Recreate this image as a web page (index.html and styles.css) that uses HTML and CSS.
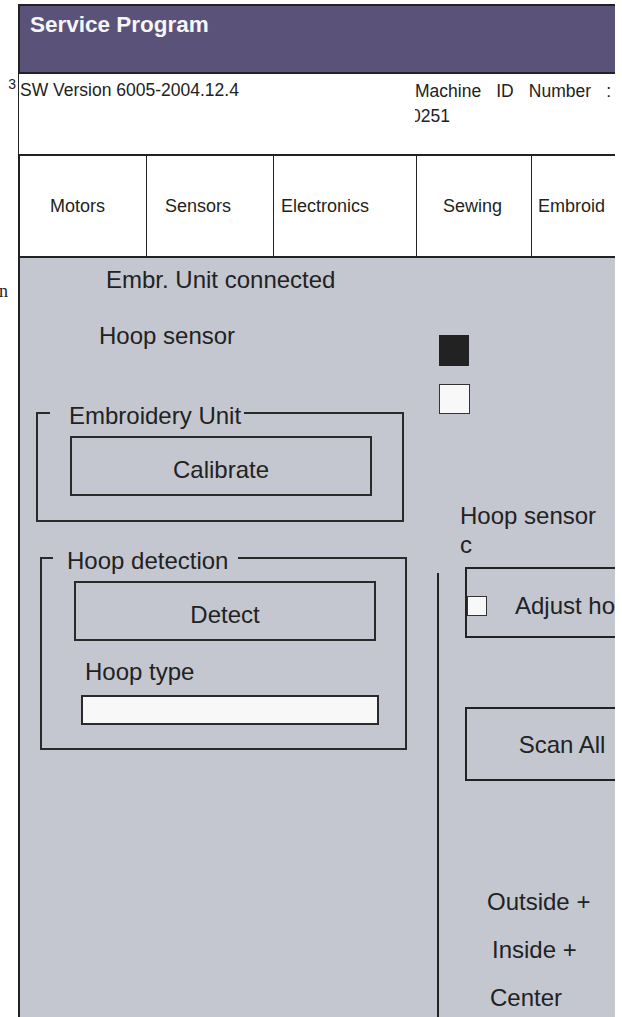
FILE: index.html
```html
<!DOCTYPE html>
<html lang="en">
<head>
  <meta charset="UTF-8" />
  <meta name="viewport" content="width=device-width, initial-scale=1.0" />
  <title>Service Program</title>
  <link rel="stylesheet" href="styles.css">
</head>
<body>

  <div class="page">
    <div class="gutter"></div>
    <header class="title-bar">Service Program</header>

    <div class="gutter note">3</div>
    <div class="info">
      <span class="sw-version">SW Version 6005-2004.12.4</span>
      <div class="machine-id">
        <p class="mid-label">Machine ID Number :</p>
        <p class="mid-value">0251</p>
      </div>
    </div>

    <div class="gutter"></div>
    <nav class="tabs">
      <div class="tab">Motors</div>
      <div class="tab">Sensors</div>
      <div class="tab">Electronics</div>
      <div class="tab">Sewing</div>
      <div class="tab">Embroid</div>
    </nav>

    <div class="gutter stray">n</div>
    <main class="panel">
      <div class="col-left">
        <p class="status">Embr. Unit connected</p>
        <p class="status sensor">Hoop sensor</p>

        <fieldset class="group embroidery">
          <legend>Embroidery Unit</legend>
          <button type="button" class="btn">Calibrate</button>
        </fieldset>

        <fieldset class="group detection">
          <legend>Hoop detection</legend>
          <button type="button" class="btn">Detect</button>
          <label class="field-label" for="hoopType">Hoop type</label>
          <input type="text" id="hoopType" class="field" readonly />
        </fieldset>
      </div>

      <div class="col-right">
        <div class="lamp on"></div>
        <div class="lamp off"></div>
        <p class="sensor-title">Hoop sensor<br>c</p>

        <div class="sub">
          <div class="adjust">
            <span class="check"></span>
            <span class="adjust-text">Adjust hoop</span>
          </div>
          <div class="scan">Scan All</div>
          <p class="target outside">Outside +</p>
          <p class="target inside">Inside +</p>
          <p class="target center">Center</p>
        </div>
      </div>
    </main>
  </div>

</body>
</html>
```

FILE: styles.css
```css
body { margin: 0; background: #fff; color: #222; font-family: "Liberation Sans", Arial, sans-serif; }
p { margin: 0; }

.page { display: grid; grid-template-columns: 18px 597px; margin-top: 4px; }
.gutter { background: #fff; }
.note { font-size: 14px; line-height: 14px; text-align: right; padding: 3px 2px 0 0; }
.stray { font-family: "Liberation Serif", serif; font-size: 18px; line-height: 20px; padding-top: 23px; margin-left: -1px; }

/* header */
.title-bar { height: 70px; box-sizing: border-box; background: #5a5279; color: #f6f6f6; border: 2px solid #222; border-right: none; padding: 6px 0 0 10px; font-size: 22.5px; line-height: 26px; font-weight: bold; }

.info { height: 80px; box-sizing: border-box; display: flex; align-items: flex-start; border-left: 1px solid #222; padding: 6px 4px 0 1px; font-size: 17.5px; background: #fff; }
.sw-version { line-height: 20px; }
.machine-id { margin-left: auto; margin-top: -1px; width: 196px; overflow: hidden; line-height: 25px; }
.mid-label { text-align: justify; text-align-last: justify; }
.mid-value { text-indent: -4px; }

/* tabs */
.tabs { height: 104px; box-sizing: border-box; display: grid; grid-template-columns: 127px 127px 143px 115px 1fr; border: 2px solid #222; border-right: none; background: #fff; font-size: 18px; line-height: 20px; }
.tab { display: flex; align-items: center; border-right: 1px solid #222; color: #231f20; }
.tab:nth-child(1) { padding-left: 30px; }
.tab:nth-child(2) { padding-left: 18px; }
.tab:nth-child(3) { padding-left: 7px; }
.tab:nth-child(4) { padding-left: 26px; }
.tab:nth-child(5) { padding-left: 6px; border-right: none; }

/* main panel */
.panel { height: 759px; overflow: hidden; display: grid; grid-template-columns: 417px 1fr; background: #c4c7d0; border-left: 2px solid #222; font-size: 24px; line-height: 27px; }

.status { margin-top: 8px; padding-left: 86px; white-space: nowrap; }
.status.sensor { margin-top: 29px; padding-left: 79px; }

.group { border: 2px solid #2a2a2a; margin: 0; box-sizing: border-box; min-width: 0; }
.group legend { padding: 5px 3px 0 19px; line-height: 27px; }
.embroidery { width: 368px; margin: 48px 0 0 16px; padding: 7px 0 24px 12px; }
.embroidery .btn { margin-left: 20px; }
.detection { width: 367px; margin: 20px 0 0 20px; padding: 7px 0 23px 11px; }
.detection legend { padding: 5px 10px 0 14px; }
.detection .btn { margin-left: 21px; }

.btn { display: block; width: 302px; box-sizing: border-box; padding: 18px 0 11px; background: transparent; border: 2px solid #2a2a2a; font: inherit; line-height: 27px; color: #222; text-align: center; }

.field-label { display: block; margin: 17px 0 0 32px; }
.field { display: block; width: 298px; height: 30px; box-sizing: border-box; margin: 10px 0 0 28px; border: 2px solid #2a2a2a; background: #f8f8f8; padding: 0; }

/* right column */
.col-right { display: flex; flex-direction: column; }
.lamp { width: 30px; height: 31px; margin-left: 2px; box-sizing: border-box; }
.lamp.on { margin-top: 77px; background: #222; }
.lamp.off { margin-top: 18px; width: 31px; height: 30px; background: #f8f8f8; border: 1px solid #333; }
.sensor-title { margin-top: 87px; padding-left: 23px; line-height: 29px; }

.sub { flex: 1; margin-top: 8px; background: linear-gradient(#222, #222) no-repeat 0 6px / 2px 100%; }
.adjust { display: flex; align-items: center; width: 220px; height: 71px; box-sizing: border-box; margin-left: 28px; padding-top: 6px; border: 2px solid #222; white-space: nowrap; }
.check { width: 20px; height: 20px; box-sizing: border-box; background: #f8f8f8; border: 1px solid #333; flex: none; }
.adjust-text { margin-left: 28px; }

.scan { display: flex; align-items: center; justify-content: center; width: 194px; height: 74px; box-sizing: border-box; margin: 69px 0 0 28px; border: 2px solid #222; white-space: nowrap; }

.target { line-height: 48px; white-space: nowrap; }
.outside { margin-top: 97px; padding-left: 50px; }
.inside { padding-left: 55px; }
.center { padding-left: 53px; }
```
